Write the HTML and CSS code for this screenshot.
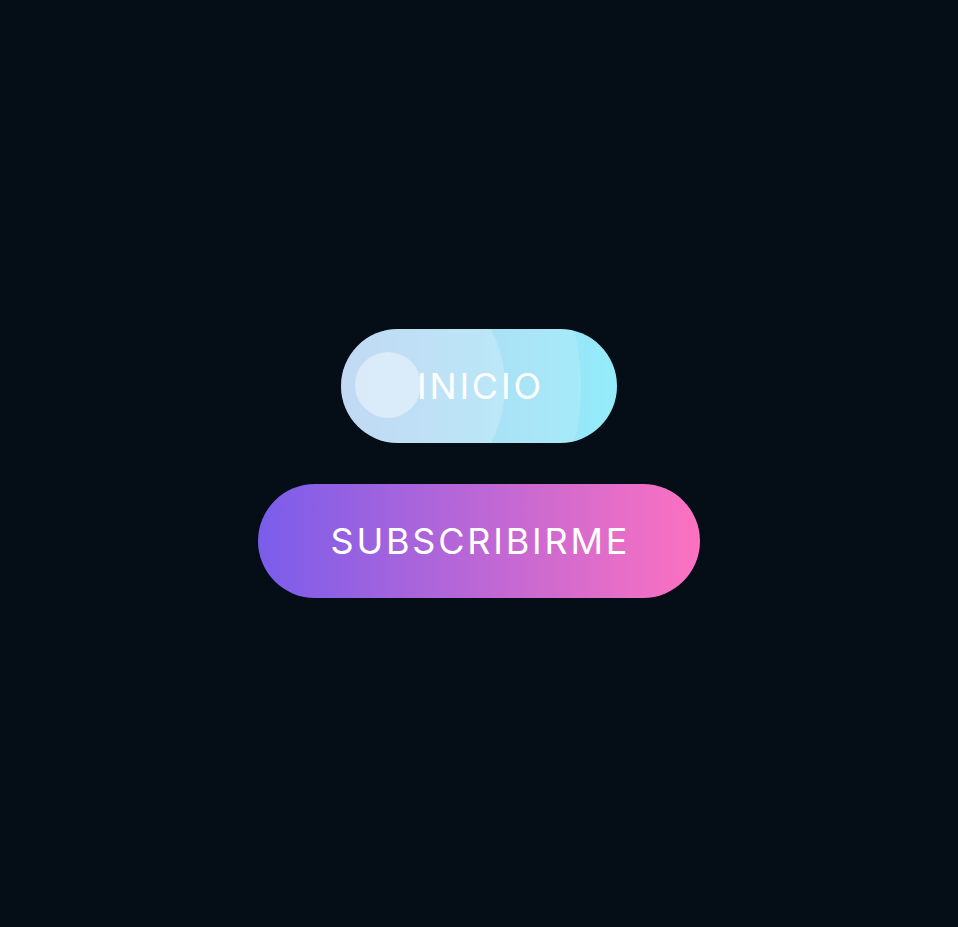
FILE: index.html
```html
<!DOCTYPE html>
<html lang="es">
<head>
<meta charset="utf-8">
<title>Botones</title>
<link rel="stylesheet" href="styles.css">
</head>
<body>
<main class="stack">
  <a class="btn btn-inicio" href="#">
    <span class="ripple ripple-lg"></span>
    <span class="ripple ripple-md"></span>
    <span class="ripple ripple-sm"></span>
    <span class="label">INICIO</span>
  </a>
  <a class="btn btn-sub" href="#">
    <span class="label">SUBSCRIBIRME</span>
  </a>
</main>
</body>
</html>
```
FILE: styles.css
```css
html, body {
  margin: 0;
  height: 100%;
}
body {
  background: #050d17;
  font-family: "Inter", "Noto Sans", sans-serif;
}
.stack {
  height: 100%;
  display: flex;
  flex-direction: column;
  align-items: center;
  justify-content: center;
  gap: 41px;
}
.btn {
  position: relative;
  overflow: hidden;
  display: flex;
  align-items: center;
  justify-content: center;
  height: 114px;
  border-radius: 57px;
  text-decoration: none;
  color: #ffffff;
  font-size: 36px;
  font-weight: 400;
  letter-spacing: 2.8px;
}
.label {
  position: relative;
  z-index: 2;
  padding-left: 2.8px;
}
.btn-inicio {
  width: 276px;
  background: linear-gradient(90deg, #a6c8ef 0%, #94ecf9 100%);
}
.ripple {
  position: absolute;
  border-radius: 50%;
  background: rgba(255, 255, 255, 0.15);
}
.ripple-lg {
  width: 470px;
  height: 470px;
  left: -230px;
  top: -178px;
}
.ripple-md {
  width: 246px;
  height: 246px;
  left: -82px;
  top: -66px;
  background: rgba(255, 255, 255, 0.2);
}
.ripple-sm {
  width: 66px;
  height: 66px;
  left: 14px;
  top: 23px;
  background: rgba(255, 255, 255, 0.42);
}
.btn-sub {
  width: 442px;
  background: linear-gradient(90deg, #7a5deb 0%, #fd71c0 100%);
}
```
